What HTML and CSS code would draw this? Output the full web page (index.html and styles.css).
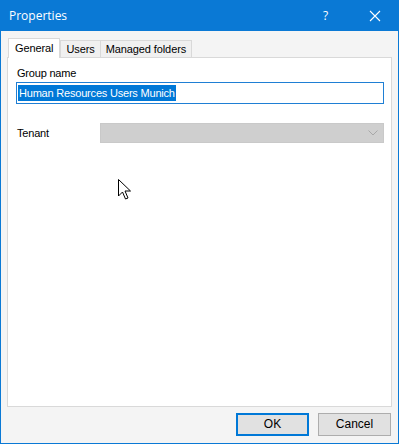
FILE: index.html
```html
<!DOCTYPE html>
<html>
<head>
<meta charset="utf-8">
<link rel="stylesheet" href="styles.css">
</head>
<body>
<div class="window">
  <div class="titlebar">
    <span class="title">Properties</span>
    <span class="help">?</span>
    <span class="close">
      <svg width="12" height="12" viewBox="0 0 12 12"><path d="M1 1L11 11M11 1L1 11" stroke="#fff" stroke-width="1.1" fill="none"/></svg>
    </span>
  </div>
  <div class="client">
    <div class="tabs">
      <div class="tab active">General</div>
      <div class="tab">Users</div>
      <div class="tab">Managed folders</div>
    </div>
    <div class="panel">
      <div class="label">Group name</div>
      <div class="textbox"><span class="sel">Human Resources Users Munich</span></div>
      <div class="row">
        <span class="label tenant">Tenant</span>
        <div class="combo">
          <svg width="10" height="6" viewBox="0 0 10 6"><path d="M0.5 0.5L5 5L9.5 0.5" stroke="#a8a8a8" stroke-width="1" fill="none"/></svg>
        </div>
      </div>
      <svg class="cursor" width="14" height="22" viewBox="0 0 14 22"><path d="M0.5 0.5V17L4.5 13L7.5 20L10 19L7 12H12.5Z" fill="#fff" stroke="#000" stroke-width="1"/></svg>
    </div>
    <div class="buttons">
      <div class="btn default">OK</div>
      <div class="btn">Cancel</div>
    </div>
  </div>
</div>
</body>
</html>
```
FILE: styles.css
```css
html, body { margin: 0; padding: 0; }
body { width: 399px; height: 444px; overflow: hidden; font-family: "Liberation Sans", Arial, sans-serif; font-size: 11px; color: #000; }
.window { width: 399px; height: 444px; box-sizing: border-box; display: flex; flex-direction: column; background: #0a79d5; }
.titlebar { height: 31px; display: flex; align-items: center; color: #fff; flex: none; }
.title { font-family: "Open Sans", "Noto Sans", sans-serif; font-size: 12px; margin-left: 9px; flex: 1; margin-top: -1px; }
.help { font-family: "Open Sans", sans-serif; font-size: 12px; width: 14px; margin-right: 32px; margin-top: -1px; }
.close { width: 12px; height: 12px; display: flex; margin-right: 18px; }
.client { flex: 1; margin: 0 1px 1px 1px; background: #f4f4f4; display: flex; flex-direction: column; padding: 7px 6px 0 6px; position: relative; }
.tabs { display: flex; height: 19px; align-items: flex-end; position: relative; z-index: 1; }
.tab { height: 17px; box-sizing: border-box; border: 1px solid #d9d9d9; border-bottom: none; background: #f0f0f0; padding: 0 5px; line-height: 16px; margin-right: -1px; font-size: 11px; letter-spacing: -0.1px; }
.tab.active { height: 20px; background: #fff; padding: 0 6px; margin-bottom: -1px; line-height: 18px; margin-left: 1px; margin-right: 0; }
.panel { height: 350px; box-sizing: border-box; border: 1px solid #d9d9d9; background: #fff; padding: 8px 6px 0 9px; position: relative; }
.label { font-size: 11px; line-height: 14px; letter-spacing: -0.2px; }
.textbox { margin-top: 2px; height: 22px; box-sizing: border-box; border: 1px solid #1f7fd4; background: #fff; padding: 2px 1px; width: 368px; margin-left: -1px; }
.sel { background: #0078d7; color: #fff; font-size: 11px; letter-spacing: -0.2px; line-height: 16px; display: inline-block; height: 16px; padding: 0 1px; }
.row { display: flex; align-items: center; margin-top: 19px; }
.tenant { width: 83px; }
.combo { width: 284px; height: 20px; background: #cfcfcf; box-sizing: border-box; border: 1px solid #c9c9c9; display: flex; align-items: center; justify-content: flex-end; padding-right: 5px; }
.cursor { position: absolute; left: 110px; top: 121px; }
.buttons { display: flex; justify-content: flex-end; gap: 9px; padding: 6px 1px 0 0; }
.btn { width: 73px; height: 23px; box-sizing: border-box; border: 1px solid #adadad; background: #e1e1e1; text-align: center; line-height: 21px; font-size: 12px; }
.btn.default { border: 2px solid #0078d7; line-height: 19px; }
```
